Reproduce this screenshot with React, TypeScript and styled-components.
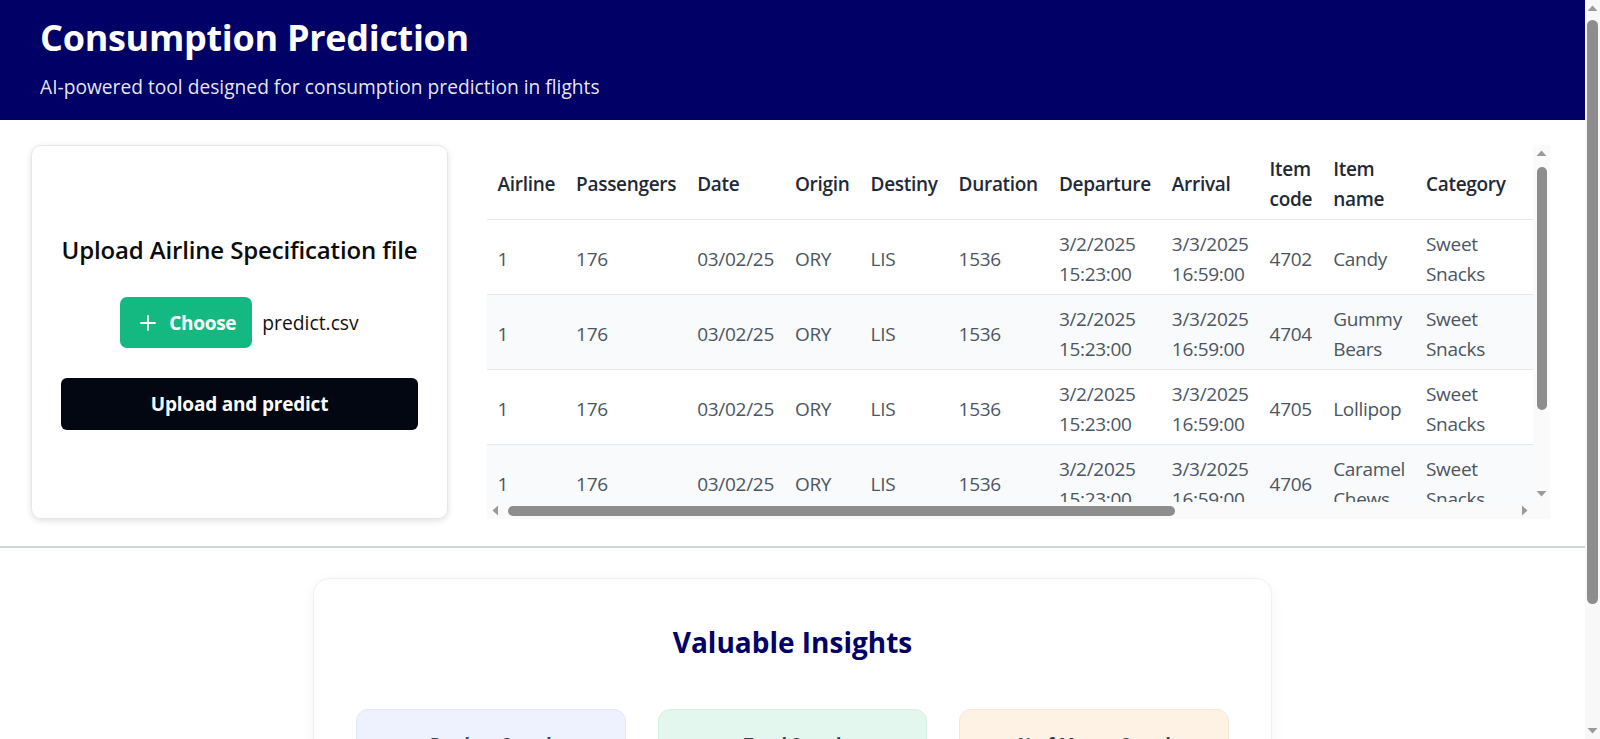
import React from 'react';
import styled, { createGlobalStyle } from 'styled-components';
import { Plus } from 'lucide-react';

const GlobalStyle = createGlobalStyle`
  body {
    margin: 0;
    background: #ffffff;
    font-family: "Open Sans", "Noto Sans", Arial, sans-serif;
    color: #111827;
  }
  * { box-sizing: border-box; }
`;

const Shell = styled.div`
  display: flex;
  align-items: flex-start;
`;

const Page = styled.div`
  flex: 1;
  min-width: 0;
`;

const Header = styled.header`
  background: #000066;
  padding: 18px 40px 19px;
  color: #ffffff;
`;

const Title = styled.h1`
  margin: 0 0 15px;
  font-size: 36px;
  line-height: 40px;
  font-weight: 700;
  letter-spacing: -0.3px;
`;

const Subtitle = styled.p`
  margin: 0;
  font-size: 19.2px;
  line-height: 28px;
  color: rgba(255, 255, 255, 0.92);
`;

const Main = styled.main`
  padding: 25px 35px 0 31px;
`;

const TopRow = styled.div`
  display: flex;
  gap: 39px;
  height: 374px;
`;

const UploadCard = styled.section`
  width: 417px;
  flex-shrink: 0;
  border: 1px solid #e5e7eb;
  border-radius: 10px;
  box-shadow: 0 2px 6px rgba(0, 0, 0, 0.12);
  display: flex;
  flex-direction: column;
  justify-content: center;
  align-items: center;
  padding: 0 28px;
`;

const CardTitle = styled.h2`
  margin: 0 0 31px;
  font-size: 24px;
  line-height: 32px;
  font-weight: 600;
  letter-spacing: -0.15px;
  color: #0b0b0b;
  text-align: center;
  white-space: nowrap;
`;

const ChooseRow = styled.div`
  display: flex;
  align-items: center;
  gap: 10px;
  margin-bottom: 30px;
`;

const ChooseButton = styled.button`
  display: flex;
  align-items: center;
  gap: 9px;
  height: 51px;
  padding: 0 16px;
  border: none;
  border-radius: 7px;
  background: #14b981;
  color: #ffffff;
  font-family: inherit;
  font-size: 19px;
  font-weight: 700;
  letter-spacing: -0.3px;
`;

const FileName = styled.span`
  font-size: 19.3px;
  color: #111111;
`;

const PredictButton = styled.button`
  width: 357px;
  height: 52px;
  flex-shrink: 0;
  border: none;
  border-radius: 6px;
  background: #030712;
  color: #ffffff;
  font-family: inherit;
  font-size: 19px;
  font-weight: 700;
  letter-spacing: -0.2px;
`;

const TableFrame = styled.div`
  flex: 1;
  min-width: 0;
  display: grid;
  grid-template-columns: minmax(0, 1fr) 17px;
  grid-template-rows: minmax(0, 1fr) 17px;
  background: #fafafa;
`;

const TableWrap = styled.div`
  overflow: hidden;
  background: #ffffff;
`;

const VTrack = styled.div`
  display: flex;
  flex-direction: column;
  align-items: center;
`;

const HTrack = styled.div`
  display: flex;
  align-items: center;
`;

const ArrowBox = styled.div`
  width: 17px;
  height: 17px;
  flex-shrink: 0;
  display: flex;
  align-items: center;
  justify-content: center;
`;

const Spacer = styled.div`
  flex: 1;
`;

const VThumb = styled.div`
  width: 10px;
  margin-top: 5px;
  border-radius: 5px;
  background: #8d8d8d;
`;

const HThumb = styled.div`
  height: 10px;
  margin-left: 4px;
  border-radius: 5px;
  background: #8d8d8d;
`;

const PageBar = styled.aside`
  position: sticky;
  top: 0;
  width: 15px;
  height: 100vh;
  flex-shrink: 0;
  display: flex;
  flex-direction: column;
  align-items: center;
  background: #f8f8f8;
`;

const PageThumb = styled.div`
  width: 11px;
  margin-top: 3px;
  border-radius: 6px;
  background: #8d8d8d;
`;

const Table = styled.table`
  width: 100%;
  border-collapse: collapse;
  font-size: 19px;
  line-height: 30px;
  letter-spacing: -0.3px;
`;

const Th = styled.th<{ $minWidth?: number }>`
  padding: 9px 10.5px 5px;
  min-width: ${(p) => (p.$minWidth ? `${p.$minWidth}px` : 'auto')};
  text-align: left;
  vertical-align: middle;
  font-weight: 600;
  color: #1f2937;
  border-bottom: 1px solid #e5e7eb;
  background: #ffffff;
`;

const Tr = styled.tr<{ $striped: boolean }>`
  background: ${(p) => (p.$striped ? '#f9fafb' : '#ffffff')};
  border-bottom: 1px solid #e5e7eb;
`;

const Td = styled.td`
  padding: 9px 10.5px 5px;
  vertical-align: middle;
  color: #4b5563;
`;

const Divider = styled.hr`
  margin: 27px 0 0;
  border: none;
  height: 2px;
  background: #d1d5db;
`;

const Insights = styled.section`
  width: 959px;
  margin: 30px auto 24px;
  padding: 40px 42px;
  border: 1px solid #f0f0f0;
  border-radius: 16px;
  box-shadow: 0 4px 14px rgba(0, 0, 0, 0.05);
`;

const InsightsTitle = styled.h2`
  margin: 5px 0 49px;
  font-size: 28px;
  line-height: 36px;
  font-weight: 700;
  color: #000066;
  text-align: center;
`;

const StatGrid = styled.div`
  display: grid;
  grid-template-columns: repeat(3, 1fr);
  gap: 32px;
`;

const tones = {
  blue: { bg: '#eef2fe', border: '#e3e8f8' },
  green: { bg: '#e4f7ee', border: '#d6f0e3' },
  orange: { bg: '#fdf2e4', border: '#f6e6d2' },
};

const StatCard = styled.div<{ $tone: keyof typeof tones }>`
  background: ${(p) => tones[p.$tone].bg};
  border: 1px solid ${(p) => tones[p.$tone].border};
  border-radius: 12px;
  padding: 21px 20px 24px;
  text-align: center;
`;

const StatLabel = styled.div`
  font-size: 17px;
  line-height: 28px;
  font-weight: 700;
  color: #374151;
`;

const StatValue = styled.div`
  margin-top: 10px;
  font-size: 28px;
  line-height: 36px;
  font-weight: 700;
  color: #000066;
`;

const StatNote = styled.div`
  margin-top: 6px;
  font-size: 15px;
  color: #6b7280;
`;

const rotation = { up: 0, right: 90, down: 180, left: 270 };

function Arrow({ dir }: { dir: keyof typeof rotation }) {
  return (
    <svg width="11" height="11" viewBox="0 0 11 11">
      <polygon
        points="0.5,8 5.5,2.5 10.5,8"
        fill="#9a9a9a"
        transform={`rotate(${rotation[dir]} 5.5 5.5)`}
      />
    </svg>
  );
}

const columns: { label: string; minWidth?: number }[] = [
  { label: 'Airline' },
  { label: 'Passengers' },
  { label: 'Date' },
  { label: 'Origin' },
  { label: 'Destiny' },
  { label: 'Duration' },
  { label: 'Departure' },
  { label: 'Arrival' },
  { label: 'Item code' },
  { label: 'Item name' },
  { label: 'Category', minWidth: 118 },
  { label: 'Quantity' },
  { label: 'Unit price' },
  { label: 'Predicted consumption' },
  { label: 'Waste' },
  { label: 'Total cost' },
];

const items = [
  { code: '4702', name: 'Candy', qty: '60', price: '1.20', pred: '48', waste: '12', cost: '57.60' },
  { code: '4704', name: 'Gummy Bears', qty: '60', price: '1.50', pred: '41', waste: '19', cost: '61.50' },
  { code: '4705', name: 'Lollipop', qty: '40', price: '0.80', pred: '27', waste: '13', cost: '21.60' },
  { code: '4706', name: 'Caramel Chews', qty: '40', price: '1.10', pred: '30', waste: '10', cost: '33.00' },
  { code: '4707', name: 'Toffee', qty: '80', price: '0.90', pred: '66', waste: '14', cost: '59.40' },
];

export default function App() {
  return (
    <Shell>
      <GlobalStyle />
      <Page>
        <Header>
          <Title>Consumption Prediction</Title>
          <Subtitle>AI-powered tool designed for consumption prediction in flights</Subtitle>
        </Header>
        <Main>
          <TopRow>
            <UploadCard>
              <CardTitle>Upload Airline Specification file</CardTitle>
              <ChooseRow>
                <ChooseButton type="button">
                  <Plus size={24} strokeWidth={1.8} />
                  Choose
                </ChooseButton>
                <FileName>predict.csv</FileName>
              </ChooseRow>
              <PredictButton type="button">Upload and predict</PredictButton>
            </UploadCard>
            <TableFrame>
              <TableWrap>
                <Table>
                  <thead>
                    <tr>
                      {columns.map((c) => (
                        <Th key={c.label} $minWidth={c.minWidth}>
                          {c.label}
                        </Th>
                      ))}
                    </tr>
                  </thead>
                  <tbody>
                    {items.map((it, i) => (
                      <Tr key={it.code} $striped={i % 2 === 1}>
                        <Td>1</Td>
                        <Td>176</Td>
                        <Td>03/02/25</Td>
                        <Td>ORY</Td>
                        <Td>LIS</Td>
                        <Td>1536</Td>
                        <Td>3/2/2025 15:23:00</Td>
                        <Td>3/3/2025 16:59:00</Td>
                        <Td>{it.code}</Td>
                        <Td>{it.name}</Td>
                        <Td>Sweet Snacks</Td>
                        <Td>{it.qty}</Td>
                        <Td>{it.price}</Td>
                        <Td>{it.pred}</Td>
                        <Td>{it.waste}</Td>
                        <Td>{it.cost}</Td>
                      </Tr>
                    ))}
                  </tbody>
                </Table>
              </TableWrap>
              <VTrack>
                <ArrowBox>
                  <Arrow dir="up" />
                </ArrowBox>
                <VThumb style={{ height: 243 }} />
                <Spacer />
                <ArrowBox>
                  <Arrow dir="down" />
                </ArrowBox>
              </VTrack>
              <HTrack>
                <ArrowBox>
                  <Arrow dir="left" />
                </ArrowBox>
                <HThumb style={{ width: 667 }} />
                <Spacer />
                <ArrowBox>
                  <Arrow dir="right" />
                </ArrowBox>
              </HTrack>
              <div />
            </TableFrame>
          </TopRow>
        </Main>
        <Divider />
        <Insights>
          <InsightsTitle>Valuable Insights</InsightsTitle>
          <StatGrid>
            <StatCard $tone="blue">
              <StatLabel>Product Saved</StatLabel>
              <StatValue>1,284</StatValue>
              <StatNote>units per month</StatNote>
            </StatCard>
            <StatCard $tone="green">
              <StatLabel>Total Saved</StatLabel>
              <StatValue>€ 3,412</StatValue>
              <StatNote>per month</StatNote>
            </StatCard>
            <StatCard $tone="orange">
              <StatLabel>% of Money Saved</StatLabel>
              <StatValue>18.6%</StatValue>
              <StatNote>vs. current loading</StatNote>
            </StatCard>
          </StatGrid>
        </Insights>
      </Page>
      <PageBar>
        <ArrowBox>
          <Arrow dir="up" />
        </ArrowBox>
        <PageThumb style={{ height: 584 }} />
        <Spacer />
        <ArrowBox>
          <Arrow dir="down" />
        </ArrowBox>
      </PageBar>
    </Shell>
  );
}
